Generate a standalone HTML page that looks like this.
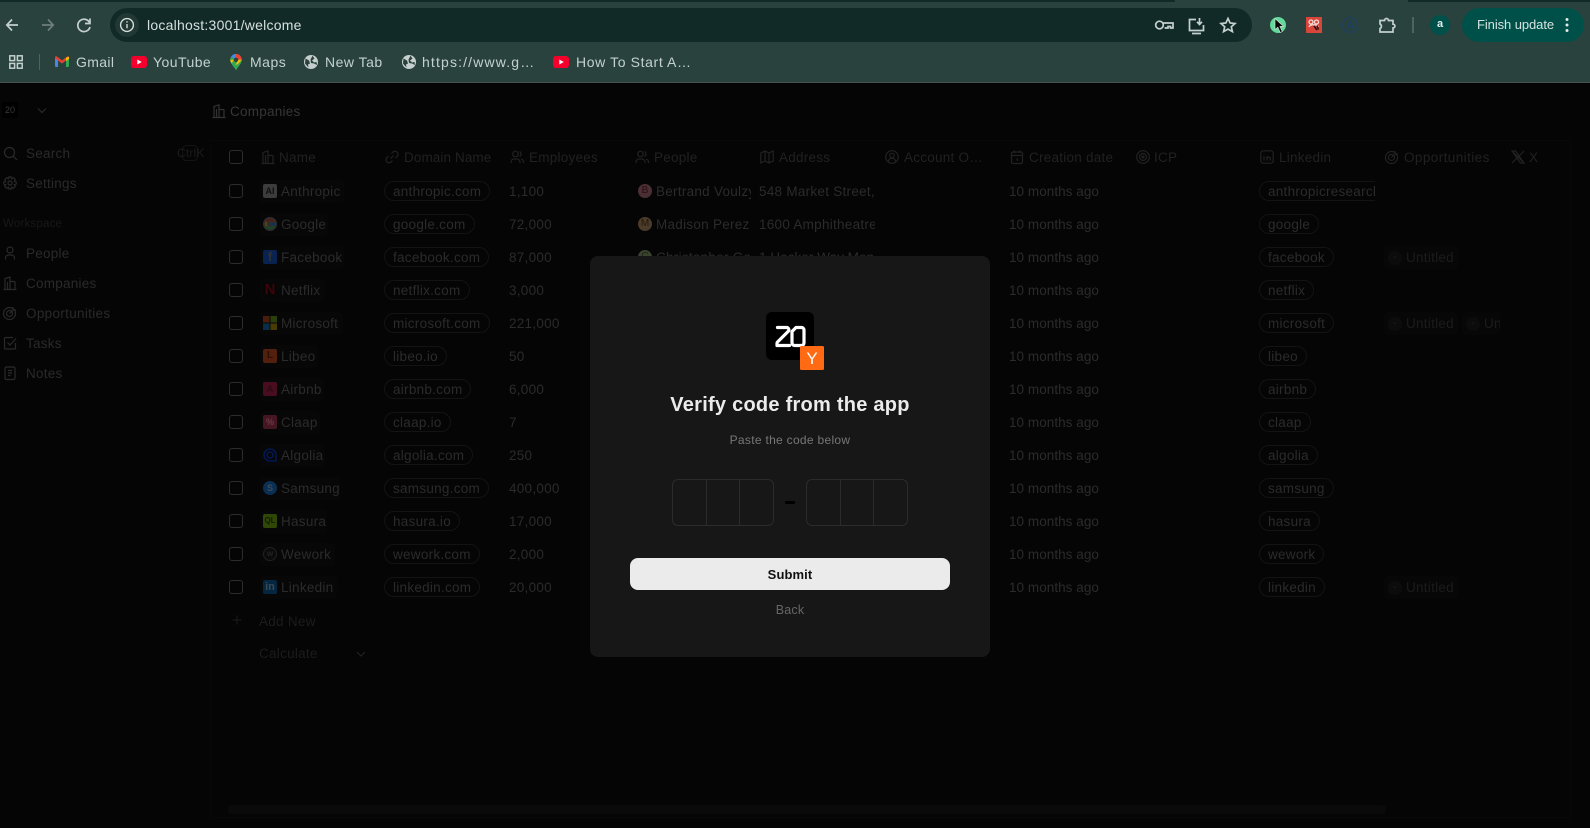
<!DOCTYPE html>
<html lang="en"><head><meta charset="utf-8"><title>Verify code</title>
<style>
*{box-sizing:border-box}
html,body{margin:0;padding:0;width:1590px;height:828px;overflow:hidden;background:#050505;font-family:"Liberation Sans",sans-serif}
.a,.t{position:absolute}
.t{white-space:nowrap;line-height:16px}
svg{position:absolute;overflow:visible}
#chrome{position:absolute;left:0;top:0;width:1590px;height:83px;background:#2a423e;border-bottom:1px solid #46524f}
.bm{color:#c3d2ce;font-size:14px;letter-spacing:.35px;top:54px}
.ti{fill:none;stroke:#c4d0cd;stroke-width:1.7}
#app{position:absolute;left:0;top:0;width:1590px;height:828px}
.s{left:26px;color:#2a2a2a;font-size:13.5px;letter-spacing:.25px}
.ic{fill:none;stroke:#2a2a2a;stroke-width:1.2}
.h{top:150px;color:#212121;font-size:13.5px;letter-spacing:.25px}
.hi{fill:none;stroke:#222;stroke-width:1.2}
.r{position:absolute;left:0;width:1590px;height:33px;color:#2b2b2b;font-size:13.5px;letter-spacing:.27px}
.r .t{top:9px}
.cb{position:absolute;left:229px;top:9px;width:14px;height:14px;border:1px solid #2c2c2c;border-radius:3px}
.nc{position:absolute;left:260px;top:5px;height:23px;background:#070707;border-radius:4px}
.lg{position:absolute;left:263px;top:9px;width:14px;height:14px;border-radius:2px;font-size:9px;line-height:14px;text-align:center;font-weight:700;letter-spacing:0}
.n{left:281px}
.chip{position:absolute;top:6px;height:20px;border:1px solid #131313;border-radius:10px;padding:2px 8px 0;line-height:16px;white-space:nowrap}
.d{left:384px}.l{left:1259px}
.e{left:509px}.r .dt{left:1009px;letter-spacing:.05px}
.av{position:absolute;left:638px;top:9px;width:14px;height:14px;border-radius:50%;font-size:10px;line-height:14px;text-align:center;letter-spacing:0}
.un{position:absolute;top:5px;height:23px;background:#070707;border-radius:4px;color:#1c1c1c;overflow:hidden}
.un i{position:absolute;left:4px;top:5px;width:14px;height:14px;background:#0c0c0c;border-radius:50%;color:#1f1f1f;font-style:normal;font-size:10px;line-height:13px;text-align:center}
.un b{position:absolute;left:22px;top:4px;font-weight:400;line-height:16px;white-space:nowrap}
#modal{position:absolute;left:590px;top:256px;width:400px;height:401px;background:#171717;border-radius:8px}
.cell{position:absolute;top:479px;height:47px;border:1px solid #2b2b2b}
</style></head><body>

<div id="chrome">
<div class="a" style="left:0;top:0;width:1175px;height:2px;background:#122a27"></div>
<div class="a" style="left:1408px;top:0;width:182px;height:2px;background:#122a27"></div>

<svg style="left:0;top:0" width="110" height="50" class="ti">
<path d="M18 25H7M12 19.500 6.800 25 12 30.500"/>
<path d="M42 25H53M48 19.500 53.200 25 48 30.500" stroke="#6d7f7b"/>
<path d="M89.500 22.500A6.200 6.200 0 1 0 90 27M90 18.500v5h-5" />
</svg>

<div class="a" style="left:110px;top:8px;width:1142px;height:34px;background:#122a27;border-radius:17px"></div>
<div class="a" style="left:115px;top:13px;width:24px;height:24px;background:#213834;border-radius:50%"></div>
<svg style="left:115px;top:13px" width="24" height="24" fill="none" stroke="#d4dedb" stroke-width="1.400"><circle cx="12" cy="12" r="6.400"/><path d="M12 11v4.200M12 8.200v1.400"/></svg>
<div class="t" style="left:147px;top:17px;color:#d5e0dc;font-size:14px;letter-spacing:.24px">localhost:3001/welcome</div>

<svg style="left:1150px;top:10px" width="95" height="30" class="ti">
<circle cx="9.500" cy="15" r="3.800"/><path d="M13 13H23V18H20.500V16.500H18V18H15.500V17"/>
<path d="M46 9.500H39.500V20.500H53.500V15M46.500 23.500H49.500M42 23.500H51M49.500 8V14M47 11.800 49.500 14.500 52 11.800"/>
<path d="M78 8.500 80.100 13 85 13.500 81.300 16.800 82.400 21.600 78 19.100 73.600 21.600 74.700 16.800 71 13.500 75.900 13Z"/>
</svg>

<div class="a" style="left:1270px;top:17px;width:16px;height:16px;background:#63d99a;border-radius:50%"></div>
<svg style="left:1270px;top:17px" width="18" height="18"><path d="M5 1.500 5 12.500 7.800 10.200 10.200 15.500 12.300 14.500 9.900 9.500 13.300 9.200Z" fill="#0a0a0a" stroke="#e6e6e6" stroke-width=".6"/></svg>
<div class="a" style="left:1306px;top:17px;width:16px;height:16px;background:#d8463a"></div>
<svg style="left:1306px;top:17px" width="16" height="16" fill="none" stroke="#f5dcd8" stroke-width="1.300"><circle cx="5" cy="5" r="2"/><circle cx="10.500" cy="5" r="2"/><path d="M3 10c1-3 8-3 9.500 0" /><path d="M8 9l3 4M11 8.500l1.500 4" stroke="#2a1010" stroke-width="1.500"/></svg>
<svg style="left:1342px;top:17px" width="16" height="16" fill="none" stroke="#1d3f66" stroke-width="1.200"><circle cx="8" cy="8" r="7.300"/><path d="M5 11.500 8 4.500 11 11.500M6 9.300H10"/></svg>
<svg style="left:1379px;top:17px" width="17" height="17" fill="none" stroke="#c4d0cd" stroke-width="1.700"><path d="M1 3.500H5.500A2 2 0 0 1 9.500 3.500H14V7.200A1.800 1.800 0 0 1 14 11V15H1V11.500A2.500 2.500 0 0 0 1 7Z"/></svg>
<div class="a" style="left:1412px;top:17px;width:2px;height:16px;background:#50635f"></div>
<div class="a" style="left:1430px;top:15px;width:20px;height:20px;background:#00504a;border-radius:50%;color:#e4eeeb;font-size:11px;font-weight:700;line-height:19px;text-align:center">a</div>
<div class="a" style="left:1462px;top:8px;width:122px;height:34px;background:#00504a;border-radius:17px"></div>
<div class="t" style="left:1477px;top:17px;color:#d4e3df;font-size:13px;letter-spacing:-.08px">Finish update</div>
<svg style="left:1564px;top:17px" width="6" height="16" fill="#e0eae7"><circle cx="3" cy="2.500" r="1.500"/><circle cx="3" cy="8" r="1.500"/><circle cx="3" cy="13.500" r="1.500"/></svg>

<svg style="left:9px;top:55px" width="14" height="14" fill="none" stroke="#c4d0cd" stroke-width="1.500"><rect x=".8" y=".8" width="4.800" height="4.800"/><rect x="8.400" y=".8" width="4.800" height="4.800"/><rect x=".8" y="8.400" width="4.800" height="4.800"/><rect x="8.400" y="8.400" width="4.800" height="4.800"/></svg>
<div class="a" style="left:38.500px;top:54px;width:1.500px;height:16px;background:#50635f"></div>

<svg style="left:55px;top:56px" width="14" height="12"><path d="M0 2 3 3V11H1A1 1 0 0 1 0 10Z" fill="#4a86e8"/><path d="M11 3 14 2V10A1 1 0 0 1 13 11H11Z" fill="#34a853"/><path d="M0 1.500C0 .3 1.200 0 2 .6L7 4.500 12 .6C12.800 0 14 .3 14 1.500V2.500L11 4.500 7 7.500 3 4.500 0 2.500Z" fill="#e94235"/><path d="M11 1.800 14 .8V3L11 5Z" fill="#fbbc04"/></svg>
<div class="t bm" style="left:76px">Gmail</div>
<svg style="left:131px;top:56px" width="16" height="12"><rect width="16" height="12" rx="3" fill="#f5002d"/><path d="M6.300 3.500V8.500L10.800 6Z" fill="#fff"/></svg>
<div class="t bm" style="left:153px;letter-spacing:.45px">YouTube</div>
<svg style="left:230px;top:54px" width="12" height="17"><path d="M6 16.500C4.500 13 .2 10 .2 5.800A5.800 5.800 0 0 1 11.800 5.800C11.800 10 7.500 13 6 16.500Z" fill="#34a853"/><path d="M1.700 1.900A5.800 5.800 0 0 1 6 0V3.500L3.500 5.800Z" fill="#4a86e8"/><path d="M6 0A5.800 5.800 0 0 1 11.800 5.800H8.300L6 3.500Z" fill="#ea4335"/><path d="M.2 5.800 3.700 5.800 1.700 9.500A6 6 0 0 1 .2 5.800Z" fill="#fbbc04"/><path d="M11.800 5.800 8.300 5.800 5.500 11 8 10Z" fill="#fbbc04"/><circle cx="6" cy="5.800" r="2.200" fill="#2a423e"/></svg>
<div class="t bm" style="left:250px;letter-spacing:.5px">Maps</div>
<svg style="left:304px;top:55px" width="14" height="14"><circle cx="7" cy="7" r="7" fill="#c6cfcd"/><path d="M1.500 3.500 5 5.500 6 8.500 4 9.500 4.500 12.500 1 8.500ZM8.500 .8 10.500 3.500 8 5.500 10 7.500 12.500 7 13 10 10 8.500 7 8 6.500 4.500Z" fill="#2a423e"/></svg>
<div class="t bm" style="left:325px;letter-spacing:.5px">New Tab</div>
<svg style="left:402px;top:55px" width="14" height="14"><circle cx="7" cy="7" r="7" fill="#c6cfcd"/><path d="M1.500 3.500 5 5.500 6 8.500 4 9.500 4.500 12.500 1 8.500ZM8.500 .8 10.500 3.500 8 5.500 10 7.500 12.500 7 13 10 10 8.500 7 8 6.500 4.500Z" fill="#2a423e"/></svg>
<div class="t bm" style="left:422px;letter-spacing:1.150px">https://www.g…</div>
<svg style="left:553px;top:56px" width="16" height="12"><rect width="16" height="12" rx="3" fill="#f5002d"/><path d="M6.300 3.500V8.500L10.800 6Z" fill="#fff"/></svg>
<div class="t bm" style="left:576px;letter-spacing:.62px">How To Start A…</div>
</div>

<div id="app">
<div class="a" style="left:210px;top:140px;width:1361px;height:678px;border:1px solid #080808"></div>
<div class="a" style="left:228px;top:805px;width:1158px;height:9px;background:#0a0a0a;border-radius:4px"></div>

<!-- sidebar -->
<div class="a" style="left:2px;top:102px;width:16px;height:16px;background:#000;border-radius:2px;color:#3a3a3a;font-size:9px;line-height:16px;text-align:center">20</div>
<svg style="left:36px;top:107px" width="12" height="8" class="ic"><path d="M2 1.500 6 5.500 10 1.500"/></svg>
<svg style="left:3px;top:146px" width="15" height="15" class="ic"><circle cx="6.500" cy="6.500" r="5"/><path d="M10.200 10.200 14 14"/></svg>
<div class="t s" style="top:146px">Search</div>
<div class="a" style="left:182px;top:145px;width:16px;height:16px;border:1px solid #141414;border-radius:4px"></div>
<div class="t" style="left:177px;top:145px;color:#1c1c1c;font-size:12px;letter-spacing:.2px">CtrlK</div>
<svg style="left:3px;top:176px" width="14" height="14" class="ic"><circle cx="7" cy="7" r="2"/><path d="M6 .8H8L8.500 2.700 10.300 1.700 12.300 3.700 11.300 5.500 13.200 6V8L11.300 8.500 12.300 10.300 10.300 12.300 8.500 11.300 8 13.200H6L5.500 11.300 3.700 12.300 1.700 10.300 2.700 8.500 .8 8V6L2.700 5.500 1.700 3.700 3.700 1.700 5.500 2.700Z"/></svg>
<div class="t s" style="top:176px">Settings</div>
<div class="t" style="left:3px;top:216px;color:#181818;font-size:11.500px;letter-spacing:.2px">Workspace</div>
<svg style="left:3px;top:246px" width="14" height="14" class="ic"><circle cx="7" cy="4" r="3"/><path d="M2.500 13.500V12A3 3 0 0 1 5.500 9H8.500A3 3 0 0 1 11.500 12V13.500"/></svg>
<div class="t s" style="top:246px">People</div>
<svg style="left:3px;top:276px" width="14" height="14" class="ic"><path d="M.5 13.500H13.500M2 13.500V2.500L7 1V13.500M7 5.500H11A1 1 0 0 1 12 6.500V13.500M4.500 13.500V6"/></svg>
<div class="t s" style="top:276px">Companies</div>
<svg style="left:3px;top:306px" width="14" height="14" class="ic"><circle cx="6.500" cy="7.500" r="6"/><circle cx="6.500" cy="7.500" r="3"/><path d="M6.500 7.500 11 3M10 1V4H13"/></svg>
<div class="t s" style="top:306px;letter-spacing:.32px">Opportunities</div>
<svg style="left:3px;top:336px" width="14" height="14" class="ic"><path d="M12.500 7V12A1 1 0 0 1 11.500 13H2.500A1 1 0 0 1 1.500 12V2.500A1 1 0 0 1 2.500 1.500H10M4.500 6.500 7 9 13 2.500"/></svg>
<div class="t s" style="top:336px">Tasks</div>
<svg style="left:3px;top:366px" width="14" height="14" class="ic"><rect x="2" y="1" width="10" height="12.500" rx="1.500"/><path d="M5 4.500H9M5 7H9M5 9.500H7.500"/></svg>
<div class="t s" style="top:366px">Notes</div>

<!-- top bar -->
<svg style="left:212px;top:104px" width="14" height="14" fill="none" stroke="#333" stroke-width="1.200"><path d="M.5 13.500H13.500M2 13.500V2.500L7 .8V13.500M7 5.500H11A1 1 0 0 1 12 6.500V13.500M4.500 13.500V5"/></svg>
<div class="t" style="left:230px;top:104px;color:#363636;font-size:13.500px;letter-spacing:.25px">Companies</div>

<!-- header -->
<div class="cb" style="top:150px"></div>
<svg style="left:261px;top:150px" width="14" height="14" class="hi"><path d="M.5 13.500H13.500M2 13.500V2.500L7 .8V13.500M7 5.500H11A1 1 0 0 1 12 6.500V13.500M4.500 13.500V5"/></svg><div class="t h" style="left:279px">Name</div>
<svg style="left:385px;top:150px" width="14" height="14" class="hi"><path d="M5.500 8.500 8.500 5.500M6.500 3.500 8 2A3 3 0 0 1 12 6.500L10.500 8M7.500 10.500 6 12A3 3 0 0 1 2 7.500L3.500 6"/></svg><div class="t h" style="left:404px;letter-spacing:.1px">Domain Name</div>
<svg style="left:510px;top:150px" width="14" height="14" class="hi"><circle cx="5.500" cy="4" r="2.800"/><path d="M1 13V12A3 3 0 0 1 4 9H7A3 3 0 0 1 10 12V13M9.500 1.500A2.800 2.800 0 0 1 9.500 6.500M11 9.200A3 3 0 0 1 13.500 12V13"/></svg><div class="t h" style="left:529px">Employees</div>
<svg style="left:635px;top:150px" width="14" height="14" class="hi"><circle cx="5.500" cy="4" r="2.800"/><path d="M1 13V12A3 3 0 0 1 4 9H7A3 3 0 0 1 10 12V13M9.500 1.500A2.800 2.800 0 0 1 9.500 6.500M11 9.200A3 3 0 0 1 13.500 12V13"/></svg><div class="t h" style="left:654px">People</div>
<svg style="left:760px;top:150px" width="14" height="14" class="hi"><path d="M.8 3 5 1 9 3 13.200 1V11L9 13 5 11 .8 13ZM5 1V11M9 3V13"/></svg><div class="t h" style="left:779px">Address</div>
<svg style="left:885px;top:150px" width="14" height="14" class="hi"><circle cx="7" cy="7" r="6.300"/><circle cx="7" cy="5.500" r="2.200"/><path d="M3.200 12A3.500 3.500 0 0 1 10.800 12"/></svg><div class="t h" style="left:904px">Account O…</div>
<svg style="left:1010px;top:150px" width="14" height="14" class="hi"><rect x="1.500" y="2" width="11" height="11.500" rx="1.500"/><path d="M1.500 5.500H12.500M4.500 .5V3M9.500 .5V3M6.500 9H7.500V11"/></svg><div class="t h" style="left:1029px">Creation date</div>
<svg style="left:1136px;top:150px" width="14" height="14" class="hi"><circle cx="7" cy="7" r="6.300"/><circle cx="7" cy="7" r="3.500"/><circle cx="7" cy="7" r="1"/></svg><div class="t h" style="left:1154px">ICP</div>
<svg style="left:1260px;top:150px" width="14" height="14" class="hi"><rect x=".8" y=".8" width="12.400" height="12.400" rx="2.500"/><path d="M4 6V10.500M4 3.800V4.300M7 10.500V6M7 8A2 2 0 0 1 10.300 8V10.500"/></svg><div class="t h" style="left:1279px">Linkedin</div>
<svg style="left:1385px;top:150px" width="14" height="14" class="hi"><circle cx="6.500" cy="7.500" r="6"/><circle cx="6.500" cy="7.500" r="3"/><path d="M6.500 7.500 11 3M10 1V4H13"/></svg><div class="t h" style="left:1404px;letter-spacing:.42px">Opportunities</div>
<svg style="left:1511px;top:150px" width="14" height="14" class="hi"><path d="M1 1 13 13M13 1 1 13M1 1H4.500L13 13H9.500Z"/></svg><div class="t h" style="left:1529px">X</div>

<!-- rows -->
<div class="r" style="top:175px"><div class="cb"></div><div class="nc" style="width:84px"></div><div class="lg" style="background:#3c3c3c;color:#111">AI</div><div class="t n">Anthropic</div><div class="chip d">anthropic.com</div><div class="t e">1,100</div><div class="av" style="background:#4a3035;color:#2a0c10">B</div><div class="t" style="left:656px;width:95px;overflow:hidden">Bertrand Voulzy</div><div class="t" style="left:759px;width:116px;overflow:hidden">548 Market Street, San</div><div class="t dt">10 months ago</div><div class="chip l" style="border-right:0;border-radius:10px 0 0 10px;overflow:hidden;padding-right:0;left:1259px;width:116px">anthropicresearch</div></div>

<div class="r" style="top:208px"><div class="cb"></div><div class="nc" style="width:68px"></div><svg style="left:263px;top:9px" width="14" height="14"><circle cx="7" cy="7" r="7" fill="#2e2e2e"/><path d="M10.500 4.500A4.200 4.200 0 0 0 3.500 4.800" fill="none" stroke="#5a1712" stroke-width="1.800"/><path d="M3.500 4.800A4.200 4.200 0 0 0 3.500 9.200" fill="none" stroke="#5a4508" stroke-width="1.800"/><path d="M3.500 9.200A4.200 4.200 0 0 0 10.800 8.500" fill="none" stroke="#134a20" stroke-width="1.800"/><path d="M7.200 7H11V8.500" fill="none" stroke="#12305e" stroke-width="1.800"/></svg><div class="t n">Google</div><div class="chip d">google.com</div><div class="t e">72,000</div><div class="av" style="background:#4a3b2b;color:#261a08">M</div><div class="t" style="left:656px;width:95px;overflow:hidden">Madison Perez</div><div class="t" style="left:759px;width:116px;overflow:hidden">1600 Amphitheatre Pkwy</div><div class="t dt">10 months ago</div><div class="chip l">google</div></div>

<div class="r" style="top:241px"><div class="cb"></div><div class="nc" style="width:84px"></div><div class="lg" style="background:#082252;color:#303030;font-size:13px">f</div><div class="t n">Facebook</div><div class="chip d">facebook.com</div><div class="t e">87,000</div><div class="av" style="background:#38422e;color:#1c2610">C</div><div class="t" style="left:656px;width:95px;overflow:hidden">Christopher Gonzalez</div><div class="t" style="left:759px;width:116px;overflow:hidden;letter-spacing:.05px">1 Hacker Way Menlo Park</div><div class="t dt">10 months ago</div><div class="chip l">facebook</div><div class="un" style="left:1384px;width:74px"><i>-</i><b>Untitled</b></div></div>

<div class="r" style="top:274px"><div class="cb"></div><div class="nc" style="width:65px"></div><div class="lg" style="background:#060606;color:#3e0407;font-size:15px">N</div><div class="t n">Netflix</div><div class="chip d">netflix.com</div><div class="t e">3,000</div><div class="t dt">10 months ago</div><div class="chip l">netflix</div></div>

<div class="r" style="top:307px"><div class="cb"></div><div class="nc" style="width:83px"></div><svg style="left:263px;top:9px" width="14" height="14"><rect width="6.500" height="6.500" fill="#4a1c0c"/><rect x="7.500" width="6.500" height="6.500" fill="#2a3f0b"/><rect y="7.500" width="6.500" height="6.500" fill="#082f4a"/><rect x="7.500" y="7.500" width="6.500" height="6.500" fill="#4a3a06"/></svg><div class="t n">Microsoft</div><div class="chip d">microsoft.com</div><div class="t e">221,000</div><div class="t dt">10 months ago</div><div class="chip l">microsoft</div><div class="un" style="left:1384px;width:74px"><i>-</i><b>Untitled</b></div><div class="un" style="left:1462px;width:38px"><i>-</i><b>Untitled</b></div></div>

<div class="r" style="top:340px"><div class="cb"></div><div class="nc" style="width:58px"></div><div class="lg" style="background:#52200c;color:#2a1005;font-size:10px">L</div><div class="t n">Libeo</div><div class="chip d">libeo.io</div><div class="t e">50</div><div class="t dt">10 months ago</div><div class="chip l">libeo</div></div>

<div class="r" style="top:373px"><div class="cb"></div><div class="nc" style="width:64px"></div><div class="lg" style="background:#480e20;color:#2c0a16">A</div><div class="t n">Airbnb</div><div class="chip d">airbnb.com</div><div class="t e">6,000</div><div class="t dt">10 months ago</div><div class="chip l">airbnb</div></div>

<div class="r" style="top:406px"><div class="cb"></div><div class="nc" style="width:60px"></div><div class="lg" style="background:#461622;color:#6a3a48">%</div><div class="t n">Claap</div><div class="chip d">claap.io</div><div class="t e">7</div><div class="t dt">10 months ago</div><div class="chip l">claap</div></div>

<div class="r" style="top:439px"><div class="cb"></div><div class="nc" style="width:65px"></div><svg style="left:263px;top:9px" width="14" height="14" fill="none" stroke="#031752" stroke-width="1.600"><path d="M13 7A6 6 0 1 0 7 13H13V7"/><circle cx="7" cy="7" r="3"/></svg><div class="t n">Algolia</div><div class="chip d">algolia.com</div><div class="t e">250</div><div class="t dt">10 months ago</div><div class="chip l">algolia</div></div>

<div class="r" style="top:472px"><div class="cb"></div><div class="nc" style="width:80px"></div><div class="lg" style="background:#0a2f52;border-radius:50%;color:#3c4c5c">S</div><div class="t n">Samsung</div><div class="chip d">samsung.com</div><div class="t e">400,000</div><div class="t dt">10 months ago</div><div class="chip l">samsung</div></div>

<div class="r" style="top:505px"><div class="cb"></div><div class="nc" style="width:67px"></div><div class="lg" style="background:#304806;color:#121c02;font-size:8px">QL</div><div class="t n">Hasura</div><div class="chip d">hasura.io</div><div class="t e">17,000</div><div class="t dt">10 months ago</div><div class="chip l">hasura</div></div>

<div class="r" style="top:538px"><div class="cb"></div><div class="nc" style="width:75px"></div><div class="lg" style="background:#0b0b0b;border-radius:50%;border:1px solid #222;color:#222;line-height:11px;font-size:8px">w</div><div class="t n">Wework</div><div class="chip d">wework.com</div><div class="t e">2,000</div><div class="t dt">10 months ago</div><div class="chip l">wework</div></div>

<div class="r" style="top:571px"><div class="cb"></div><div class="nc" style="width:77px"></div><div class="lg" style="background:#052640;color:#3a4a55;font-size:11px">in</div><div class="t n">Linkedin</div><div class="chip d">linkedin.com</div><div class="t e">20,000</div><div class="t dt">10 months ago</div><div class="chip l">linkedin</div><div class="un" style="left:1384px;width:74px"><i>-</i><b>Untitled</b></div></div>

<svg style="left:232px;top:615px" width="10" height="10" stroke="#1c1c1c" stroke-width="1"><path d="M5 .5V9.500M.5 5H9.500"/></svg>
<div class="t" style="left:259px;top:614px;color:#1c1c1c;font-size:13.500px;letter-spacing:.27px">Add New</div>
<div class="t" style="left:259px;top:646px;color:#1c1c1c;font-size:13.500px;letter-spacing:.27px">Calculate</div>
<svg style="left:356px;top:651px" width="10" height="7" fill="none" stroke="#222" stroke-width="1.100"><path d="M1 1 5 5 9 1"/></svg>
</div>

<!-- modal -->
<div id="modal"></div>
<div class="a" style="left:766px;top:312px;width:48px;height:48px;background:#000;border-radius:6px"></div>
<svg style="left:766px;top:312px" width="48" height="48" fill="none" stroke="#fff" stroke-width="3.200" stroke-linejoin="round" stroke-linecap="round"><path d="M11.500 15.500H20.500A2.300 2.300 0 0 1 22.200 19.400L11.800 29.700A2.500 2.500 0 0 0 11 31.500V33.500H23.500"/><path d="M30 15.500H35.500A2.500 2.500 0 0 1 38 18V31A2.500 2.500 0 0 1 35.500 33.500H28.500A2.500 2.500 0 0 1 26 31V19.500Z"/></svg>
<div class="a" style="left:800px;top:346px;width:24px;height:24px;background:#ff6a13;border-radius:1.500px;color:#fff;font-size:17px;line-height:25px;text-align:center">Y</div>

<div class="t" style="left:590px;top:393px;width:400px;text-align:center;color:#ebebeb;font-size:20px;font-weight:700;line-height:24px;letter-spacing:.25px">Verify code from the app</div>
<div class="t" style="left:590px;top:432px;width:400px;text-align:center;color:#777;font-size:12px;letter-spacing:.3px">Paste the code below</div>

<div class="cell" style="left:672px;width:35px;border-radius:6px 0 0 6px"></div>
<div class="cell" style="left:706px;width:34px"></div>
<div class="cell" style="left:739px;width:35px;border-radius:0 6px 6px 0"></div>
<div class="a" style="left:785px;top:501px;width:10px;height:2.500px;background:#000;border-radius:1px"></div>
<div class="cell" style="left:806px;width:35px;border-radius:6px 0 0 6px"></div>
<div class="cell" style="left:840px;width:34px"></div>
<div class="cell" style="left:873px;width:35px;border-radius:0 6px 6px 0"></div>

<div class="a" style="left:630px;top:558px;width:320px;height:32px;background:#ebebeb;border-radius:8px;color:#111;font-size:13px;font-weight:700;line-height:34px;text-align:center;letter-spacing:.1px">Submit</div>
<div class="t" style="left:590px;top:602px;width:400px;text-align:center;color:#666;font-size:12.500px;letter-spacing:.2px">Back</div>

</body></html>
